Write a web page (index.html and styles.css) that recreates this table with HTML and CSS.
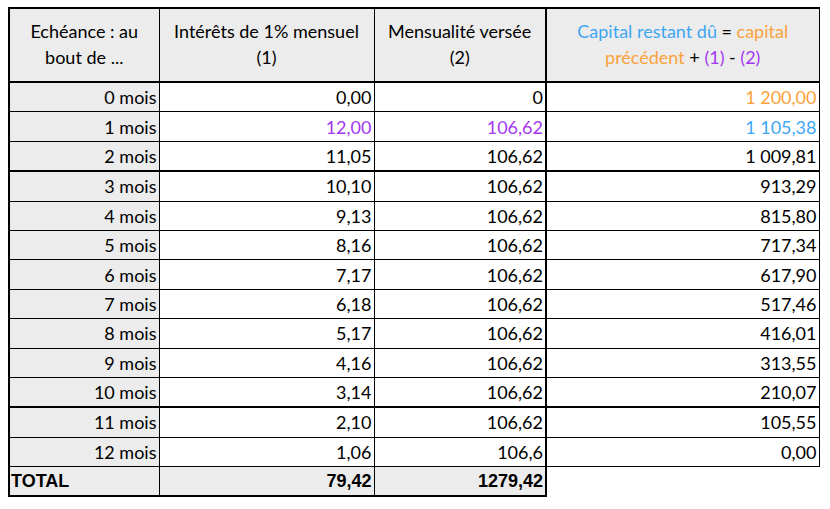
FILE: index.html
```html
<!DOCTYPE html>
<html lang="fr">
<head>
<meta charset="utf-8">
<title>Tableau d'amortissement</title>
<link rel="stylesheet" href="styles.css">
</head>
<body>
<div class="sheet">
<table class="loan">
  <colgroup>
    <col class="c1"><col class="c2"><col class="c3"><col class="c4">
  </colgroup>
  <thead>
    <tr class="head">
      <th>Echéance : au bout de ...</th>
      <th>Intérêts de 1% mensuel (1)</th>
      <th>Mensualité versée (2)</th>
      <th class="last"><span class="blue">Capital restant dû</span> = <span class="orange">capital précédent</span> + <span class="purple">(1)</span> - <span class="purple">(2)</span></th>
    </tr>
  </thead>
  <tbody>
    <tr><td class="lab">0 mois</td><td>0,00</td><td>0</td><td class="last orange">1 200,00</td></tr>
    <tr><td class="lab">1 mois</td><td class="purple">12,00</td><td class="purple">106,62</td><td class="last blue">1 105,38</td></tr>
    <tr class="sep"><td class="lab">2 mois</td><td>11,05</td><td>106,62</td><td class="last">1 009,81</td></tr>
    <tr><td class="lab">3 mois</td><td>10,10</td><td>106,62</td><td class="last">913,29</td></tr>
    <tr><td class="lab">4 mois</td><td>9,13</td><td>106,62</td><td class="last">815,80</td></tr>
    <tr><td class="lab">5 mois</td><td>8,16</td><td>106,62</td><td class="last">717,34</td></tr>
    <tr><td class="lab">6 mois</td><td>7,17</td><td>106,62</td><td class="last">617,90</td></tr>
    <tr><td class="lab">7 mois</td><td>6,18</td><td>106,62</td><td class="last">517,46</td></tr>
    <tr><td class="lab">8 mois</td><td>5,17</td><td>106,62</td><td class="last">416,01</td></tr>
    <tr><td class="lab">9 mois</td><td>4,16</td><td>106,62</td><td class="last">313,55</td></tr>
    <tr class="sep"><td class="lab">10 mois</td><td>3,14</td><td>106,62</td><td class="last">210,07</td></tr>
    <tr><td class="lab">11 mois</td><td>2,10</td><td>106,62</td><td class="last">105,55</td></tr>
    <tr><td class="lab">12 mois</td><td>1,06</td><td>106,6</td><td class="last">0,00</td></tr>
    <tr class="total"><td class="lab">TOTAL</td><td>79,42</td><td>1279,42</td><td class="empty"></td></tr>
  </tbody>
</table>
</div>
</body>
</html>
```

FILE: styles.css
```css
html, body {
  margin: 0;
  padding: 0;
  background: #ffffff;
}

.sheet {
  padding: 7px 0 0 8px;
}

.loan {
  border-collapse: collapse;
  table-layout: fixed;
  width: 810px;
  font-family: Lato, "Noto Sans", sans-serif;
  font-size: 18px;
  color: #000000;
}

.c1 { width: 150px; }
.c2 { width: 215px; }
.c3 { width: 172px; }
.c4 { width: 273px; }

.loan th,
.loan td {
  border: 1px solid #000000;
  padding: 0 2px;
  white-space: nowrap;
}

.loan th {
  background: #ececec;
  font-weight: normal;
  text-align: center;
  white-space: normal;
  line-height: 26px;
  height: 70px;
  padding: 0 9px 2px;
  border-top: 2px solid #000;
  border-bottom: 2px solid #000;
}

.loan td {
  text-align: right;
  height: 28.4px;
  line-height: 20px;
  vertical-align: middle;
}

.loan th:first-child,
.loan td:first-child {
  border-left: 2px solid #000;
}

.loan th:nth-child(3),
.loan td:nth-child(3) {
  border-right: 2px solid #000;
}

.loan td.lab {
  background: #ececec;
}

.sep td {
  border-bottom: 2px solid #000;
}

.total td {
  background: #ececec;
  border-bottom: 2px solid #000;
  font-family: "Liberation Sans", Arial, sans-serif;
  font-weight: bold;
  font-size: 18px;
}

.total td.lab {
  text-align: left;
  padding-left: 1px;
}

.total td.empty {
  background: #ffffff;
  border: none;
  border-left: 2px solid #000;
}

.blue { color: #3ea7f2; }
.orange { color: #faa23c; }
.purple { color: #a437f2; }
```
